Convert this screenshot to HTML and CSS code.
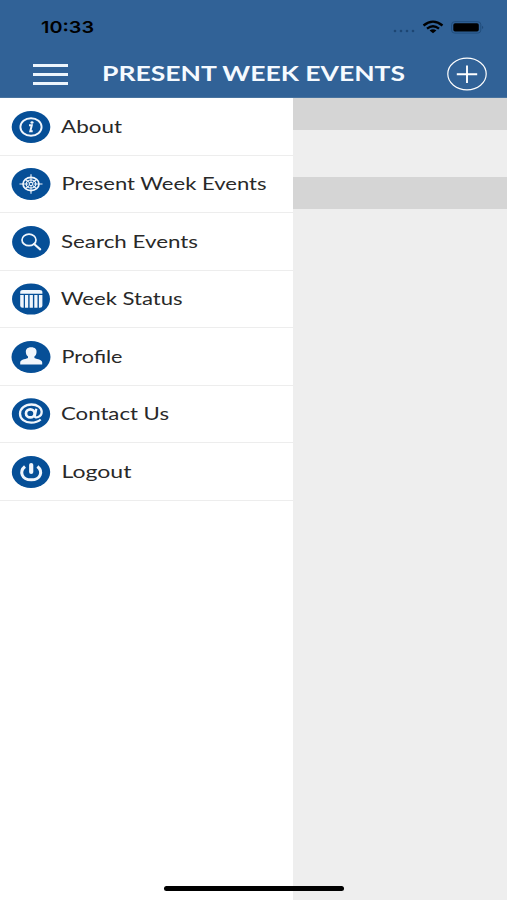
FILE: index.html
```html
<!DOCTYPE html>
<html lang="en">
<head>
<meta charset="utf-8">
<title>Present Week Events</title>
<link rel="stylesheet" href="styles.css">
</head>
<body>
<div class="screen">
  <header class="header">
    <div class="status">
      <svg class="time" width="70" height="28"><text x="5" y="19" textLength="53" lengthAdjust="spacingAndGlyphs">10:33</text></svg>
      <svg class="signals" width="92" height="16" viewBox="0 0 92 16">
        <g fill="#1d4673"><circle cx="3" cy="12" r="1.3"/><circle cx="9" cy="12" r="1.3"/><circle cx="15" cy="12" r="1.3"/><circle cx="21" cy="12" r="1.3"/></g>
        <g fill="none" stroke="#000" stroke-width="2.3"><path d="M31.500 6.500Q41-1.200 50.500 6.500"/><path d="M35 9.700Q41 4.900 47 9.700"/></g>
        <path d="M37.600 11.500Q41 9 44.400 11.500L41 14.300z"/>
        <rect x="59.600" y="2.700" width="29.200" height="11.400" rx="3" fill="none" stroke="#204d7c"/>
        <rect x="61.300" y="4.300" width="25.500" height="8.200" rx="1.800"/>
        <path d="M90.200 6.700q2 1.700 0 3.400z" fill="#1d4673"/>
      </svg>
    </div>
    <div class="navbar">
      <div class="menu"><i></i><i></i><i></i></div>
      <svg class="title" width="310" height="26"><text x="0" y="19" textLength="303" lengthAdjust="spacingAndGlyphs">PRESENT WEEK EVENTS</text></svg>
      <svg class="add" width="40" height="34" viewBox="0 0 40 34" fill="none" stroke="#fff">
        <ellipse cx="20" cy="17" rx="19.200" ry="15.800" stroke-width="1.200"/><path d="M9.800 17.300h20.400M20 8.500v17.600" stroke-width="1.900"/>
      </svg>
    </div>
  </header>
  <div class="content">
    <nav class="drawer">
      <div class="item">
        <svg class="icon" viewBox="0 0 40 32"><ellipse class="disc" cx="20" cy="16" rx="19.3" ry="15.9"/><ellipse class="line" cx="20" cy="16" rx="10.6" ry="8.7" stroke-width="1.9"/><path class="line" d="M18 14.300h2.800l-1.500 5.900h2.400" stroke-width="2"/><ellipse class="fill" cx="21" cy="11.500" rx="1.600" ry="1.200"/></svg>
        <svg class="label" width="220" height="26"><text x="0" y="18.500" textLength="61" lengthAdjust="spacingAndGlyphs">About</text></svg>
      </div>
      <div class="item">
        <svg class="icon" viewBox="0 0 40 32"><ellipse class="disc" cx="20" cy="16" rx="19.5" ry="15.9"/><g class="line"><ellipse cx="20" cy="16" rx="8" ry="6.600" stroke-width="1.700"/><ellipse cx="20" cy="16" rx="4.800" ry="4" stroke-width="1.200"/><ellipse cx="20" cy="16" rx="1.900" ry="1.600" stroke-width="1.100"/><path d="M8.500 16h8.500M23 16h8.500M20 6.300v7.400M20 18.300v7.400M14.200 11.300l3.700 3M25.800 11.300l-3.700 3M14.200 20.700l3.700-3M25.800 20.700l-3.700-3" stroke-width="1.100"/></g></svg>
        <svg class="label" width="220" height="26"><text x="0.500" y="18.500" textLength="205" lengthAdjust="spacingAndGlyphs">Present Week Events</text></svg>
      </div>
      <div class="item">
        <svg class="icon" viewBox="0 0 40 32"><ellipse class="disc" cx="20" cy="16" rx="18.900" ry="15.900"/><ellipse class="line" cx="18" cy="13.900" rx="7" ry="5.800" stroke-width="1.700"/><path class="line" d="M23.100 18l6.100 5.400" stroke-width="2.100" stroke-linecap="round"/></svg>
        <svg class="label" width="220" height="26"><text x="0" y="18.500" textLength="137" lengthAdjust="spacingAndGlyphs">Search Events</text></svg>
      </div>
      <div class="item">
        <svg class="icon" viewBox="0 0 40 32"><ellipse class="disc" cx="20" cy="16" rx="19" ry="15.600"/><path class="fill" d="M9.200 10.700V9.400q0-2.400 2.600-2.400h17q2.600 0 2.600 2.400v1.300zM9.200 11.900h3.500v12.900h-1q-2.500 0-2.500-2.100zM14 11.900h3.200v12.900h-3.200zM18.600 11.900h3.300v12.900h-3.300zM23.300 11.900h3.200v12.900h-3.200zM27.900 11.900h3.500v10.800q0 2.100-2.500 2.100h-1z"/></svg>
        <svg class="label" width="220" height="26"><text x="-0.300" y="18.500" textLength="122" lengthAdjust="spacingAndGlyphs">Week Status</text></svg>
      </div>
      <div class="item">
        <svg class="icon" viewBox="0 0 40 32"><ellipse class="disc" cx="20" cy="16" rx="19.500" ry="15.900"/><path class="fill" d="M20.200 6.300c4 0 5.700 2.200 5.300 5.100-.1 2-1 3-2.100 4v1.400c.4 1.300 7.800 1.300 7.800 4.600v2H9.200v-2c0-3.300 7.400-3.300 7.800-4.600v-1.400c-1.100-1-2-2-2.100-4-.4-2.900 1.300-5.100 5.300-5.100z"/></svg>
        <svg class="label" width="220" height="26"><text x="0.500" y="18.500" textLength="61" lengthAdjust="spacingAndGlyphs">Profile</text></svg>
      </div>
      <div class="item">
        <svg class="icon" viewBox="0 0 40 32"><ellipse class="disc" cx="20" cy="16" rx="19.200" ry="15.700"/><g class="line"><ellipse cx="19.300" cy="15.400" rx="4.300" ry="4" stroke-width="2.700"/><path d="M25.300 10.800l-1.500 7.200c-.4 2.800 6.900 1.400 6.900-4.200 0-4.200-4.500-7.300-10.200-7.300C14 6.500 9 10.500 9 15.800s4.800 8.800 11.200 8.800c3.800 0 7-.9 9.500-3.100" stroke-width="2.300"/></g></svg>
        <svg class="label" width="220" height="26"><text x="0" y="18.500" textLength="108" lengthAdjust="spacingAndGlyphs">Contact Us</text></svg>
      </div>
      <div class="item">
        <svg class="icon" viewBox="0 0 40 32"><ellipse class="disc" cx="20" cy="16" rx="19.200" ry="15.900"/><path class="line" d="M14 10.500c-5.800 4.800-3.600 13.300 6.200 13.300s12-8.500 6.200-13.300" stroke-width="3"/><path class="line" d="M20.200 9v7" stroke-width="4.200" stroke-linecap="round"/></svg>
        <svg class="label" width="220" height="26"><text x="0.500" y="18.500" textLength="70" lengthAdjust="spacingAndGlyphs">Logout</text></svg>
      </div>
    </nav>
    <main class="events"><div class="band first"></div><div class="band"></div></main>
  </div>
  <div class="home"></div>
</div>
</body>
</html>
```

FILE: styles.css
```css
* { box-sizing: border-box; }
body { margin: 0; font-family: Lato, sans-serif; }
svg { display: block; flex: none; }
.screen { position: relative; width: 507px; height: 900px; overflow: hidden; display: flex; flex-direction: column; background: #fff; }
.header { height: 98px; flex: none; background: #316297; border-bottom: 1px solid #48739f; }
.status { height: 53px; padding: 19px 23px 0 36px; display: flex; justify-content: space-between; }
.time { margin-top: -5px; }
.time text { font: 600 16.5px Inter, sans-serif; fill: #000; }
.navbar { height: 43px; display: flex; align-items: center; padding: 0 20px 0 33px; }
.menu { width: 35px; height: 21px; display: flex; flex-direction: column; justify-content: space-between; }
.menu i { height: 3px; background: #edf5fc; }
.title { margin-left: 34px; }
.title text { font-weight: 700; font-size: 20.5px; fill: #f5faff; }
.add { margin-left: auto; position: relative; top: -1px; }
.content { flex: 1; display: flex; }
.drawer { width: 293px; background: #fff; }
.item { height: 57.5px; display: flex; align-items: center; padding: 1px 0 0 11px; border-bottom: 1.5px solid #ededed; }
.icon { width: 40px; height: 32px; }
.label { margin-left: 9.5px; overflow: visible; }
.label text { font-size: 18px; fill: #292929; }
.disc { fill: #064f97; }
.line { fill: none; stroke: #f1f6fc; }
.fill { fill: #f1f6fc; }
.events { flex: 1; background: #eee; }
.band { height: 32px; background: #d5d5d5; }
.first { margin-bottom: 47px; }
.home { position: absolute; left: 164px; top: 886px; width: 180px; height: 5px; border-radius: 3px; background: #000; }
```
